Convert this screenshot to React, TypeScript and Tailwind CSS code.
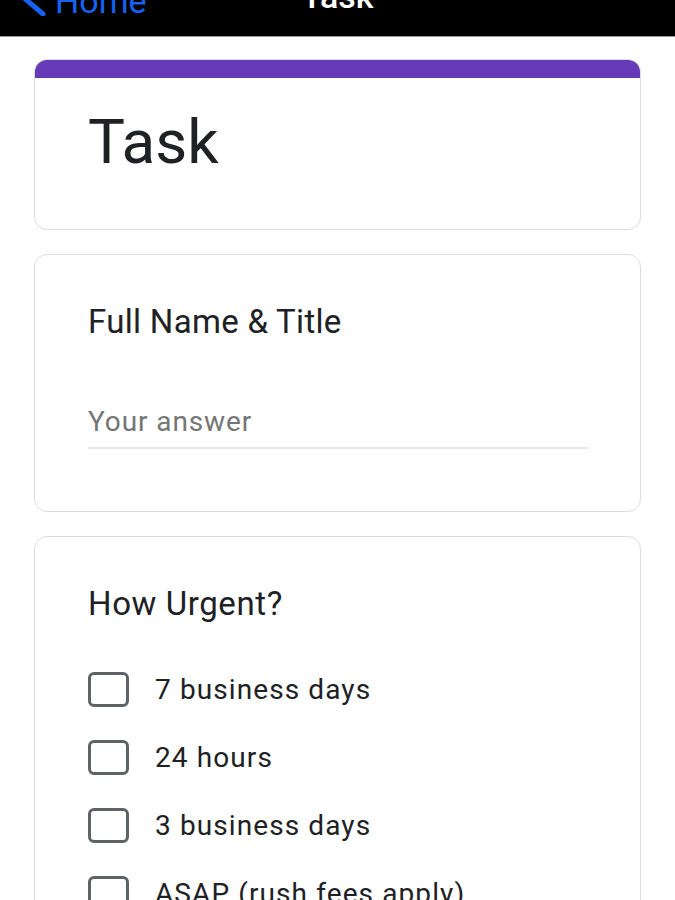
import React from 'react';

const options = ['7 business days', '24 hours', '3 business days', 'ASAP (rush fees apply)'];

const App = () => {
  return (
    <div className="min-h-[900px] bg-white font-['Roboto',sans-serif] text-[#202124] overflow-hidden">
      {/* nav bar, scrolled so only the bottom sliver shows */}
      <header className="h-[37px] bg-black border-b border-[#9a9a9a] overflow-hidden grid grid-cols-[1fr_auto_1fr]">
        <div className="flex items-start pl-[19px]">
          <svg width="28" height="40" viewBox="0 0 28 40" className="-mt-[24px] shrink-0" fill="none">
            <polyline points="24,4 4,21 24,38" stroke="#1762f2" strokeWidth="5" strokeLinecap="round" strokeLinejoin="round" />
          </svg>
          <span className="ml-[8px] -mt-[16px] text-[34px] leading-none text-[#1762f2]">Home</span>
        </div>
        <span className="-mt-[21px] text-[34px] leading-none font-medium text-white">Task</span>
        <div />
      </header>

      <main className="px-[34px] pt-[22px] flex flex-col gap-[24px]">
        {/* title card */}
        <section className="h-[171px] rounded-[13px] border border-[#dadce0] overflow-hidden">
          <div className="h-[18px] bg-[#673ab7]" />
          <h1 className="pl-[53px] pt-[33px] text-[62px] leading-none font-normal">Task</h1>
        </section>

        {/* short answer */}
        <section className="h-[258px] rounded-[13px] border border-[#dadce0] pl-[53px] pr-[51px] pt-[50px]">
          <p className="text-[33px] leading-none tracking-[0.3px]">Full Name &amp; Title</p>
          <div className="mt-[70px] pb-[11px] border-b-2 border-[#e8e8e8]">
            <p className="text-[28px] leading-none tracking-[0.9px] text-[#757575]">Your answer</p>
          </div>
        </section>

        {/* checkboxes */}
        <section className="h-[420px] rounded-[13px] border border-[#dadce0] pl-[53px] pt-[50px]">
          <p className="text-[33px] leading-none tracking-[0.6px]">How Urgent?</p>
          <div className="mt-[52px] flex flex-col gap-[33px]">
            {options.map((opt) => (
              <div key={opt} className="flex items-center">
                <div className="w-[41px] h-[35px] rounded-[6px] border-[3px] border-[#5f6368] shrink-0" />
                <span className="ml-[26px] text-[28px] leading-none tracking-[1.1px]">{opt}</span>
              </div>
            ))}
          </div>
        </section>
      </main>
    </div>
  );
};

export default App;
